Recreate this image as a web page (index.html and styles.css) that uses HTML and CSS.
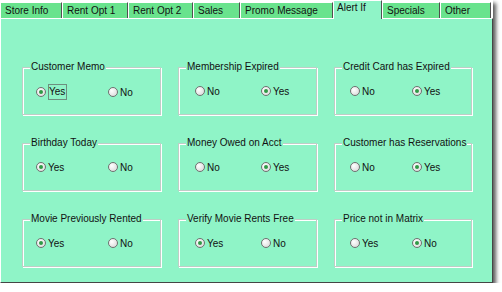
FILE: index.html
```html
<!DOCTYPE html>
<html lang="en">
<head>
<meta charset="UTF-8">
<title>Alert If</title>
<link rel="stylesheet" href="styles.css">
</head>
<body>

  <div class="window">
    <!-- tab strip -->
    <div class="tabs">
      <div class="tab">Store Info</div>
      <div class="tab">Rent Opt 1</div>
      <div class="tab">Rent Opt 2</div>
      <div class="tab">Sales</div>
      <div class="tab">Promo Message</div>
      <div class="tab active">Alert If</div>
      <div class="tab">Specials</div>
      <div class="tab">Other</div>
    </div>

    <div class="panel">
      <div class="groups">

        <fieldset class="group c1">
          <legend>Customer Memo</legend>
          <div class="opts">
            <label class="opt"><span class="radio on"></span><span class="focus">Yes</span></label>
            <label class="opt"><span class="radio"></span>No</label>
          </div>
        </fieldset>
        <fieldset class="group c2">
          <legend>Membership Expired</legend>
          <div class="opts">
            <label class="opt"><span class="radio"></span>No</label>
            <label class="opt"><span class="radio on"></span>Yes</label>
          </div>
        </fieldset>
        <fieldset class="group c3">
          <legend>Credit Card has Expired</legend>
          <div class="opts">
            <label class="opt"><span class="radio"></span>No</label>
            <label class="opt"><span class="radio on"></span>Yes</label>
          </div>
        </fieldset>

        <fieldset class="group c1">
          <legend>Birthday Today</legend>
          <div class="opts">
            <label class="opt"><span class="radio on"></span>Yes</label>
            <label class="opt"><span class="radio"></span>No</label>
          </div>
        </fieldset>
        <fieldset class="group c2">
          <legend>Money Owed on Acct</legend>
          <div class="opts">
            <label class="opt"><span class="radio"></span>No</label>
            <label class="opt"><span class="radio on"></span>Yes</label>
          </div>
        </fieldset>
        <fieldset class="group c3">
          <legend>Customer has Reservations</legend>
          <div class="opts">
            <label class="opt"><span class="radio"></span>No</label>
            <label class="opt"><span class="radio on"></span>Yes</label>
          </div>
        </fieldset>

        <fieldset class="group c1">
          <legend>Movie Previously Rented</legend>
          <div class="opts">
            <label class="opt"><span class="radio on"></span>Yes</label>
            <label class="opt"><span class="radio"></span>No</label>
          </div>
        </fieldset>
        <fieldset class="group c2">
          <legend>Verify Movie Rents Free</legend>
          <div class="opts">
            <label class="opt"><span class="radio on"></span>Yes</label>
            <label class="opt"><span class="radio"></span>No</label>
          </div>
        </fieldset>
        <fieldset class="group c3">
          <legend>Price not in Matrix</legend>
          <div class="opts">
            <label class="opt"><span class="radio"></span>Yes</label>
            <label class="opt"><span class="radio on"></span>No</label>
          </div>
        </fieldset>

      </div>
    </div>
  </div>

</body>
</html>
```

FILE: styles.css
```css
body {
  margin: 0;
  background: #ffffff;
  font-family: "Liberation Sans", Arial, sans-serif;
  font-size: 10px;
  color: #111111;
}

/* Window frame */
.window {
  width: 493px;
  height: 283px;
  display: flex;
  flex-direction: column;
  box-shadow: 3px 3px 4px rgba(0, 0, 0, 0.65);
}

/* Tabs */
.tabs {
  display: grid;
  grid-template-columns: 62px 66px 65px 47px 93px 49px 58px 51px;
  align-items: end;
  height: 18px;
}

.tab {
  box-sizing: border-box;
  height: 16px;
  padding: 2px 0 0 4px;
  background-color: #69e38d;
  border-top: 1px solid #ffffff;
  border-left: 1px solid #ffffff;
  border-right: 1px solid #505050;
  white-space: nowrap;
  overflow: hidden;
}

.tab.active {
  position: relative;
  z-index: 2;
  height: 19px;
  margin-bottom: -1px;
  padding-top: 1px;
  padding-left: 3px;
  background-color: #8ff4c7;
}

/* Panel */
.panel {
  flex: 1;
  background-color: #8ff4c7;
  border-top: 1px solid #ffffff;
  border-left: 1px solid #ffffff;
  border-right: 1px solid #454545;
  border-bottom: 1px solid #454545;
  padding: 42px 0 0 21px;
}

.groups {
  display: grid;
  grid-template-columns: 139px 139px 138px;
  grid-template-rows: 54px 54px 54px;
  column-gap: 17px;
  row-gap: 22px;
}

/* Group boxes */
.group {
  box-sizing: border-box;
  height: 54px;
  margin: 0;
  padding: 0;
  min-width: 0;
  border: 1px solid #bfcdc6;
  box-shadow: inset 1px 1px 0 #ffffff, 1px 1px 0 #ffffff;
}

.group legend {
  margin-left: 7px;
  padding: 0 1px;
  line-height: 12px;
  background-color: #8ff4c7;
}

.opts {
  display: grid;
  margin-top: 11px;
  height: 14px;
  align-items: center;
}

.c1 .opts {
  grid-template-columns: 72px auto;
  padding-left: 13px;
}

.c2 .opts {
  grid-template-columns: 66px auto;
  padding-left: 16px;
}

.c3 .opts {
  grid-template-columns: 62px auto;
  padding-left: 15px;
}

.opt {
  display: flex;
  align-items: center;
  gap: 2px;
}

/* Radio buttons */
.radio {
  box-sizing: border-box;
  width: 10px;
  height: 10px;
  border-radius: 50%;
  border: 1px solid #707070;
  background: radial-gradient(circle at 35% 35%, #ffffff, #d4d4d4);
  display: flex;
  align-items: center;
  justify-content: center;
}

.radio.on::after {
  content: "";
  width: 4px;
  height: 4px;
  border-radius: 50%;
  background-color: #2f9a45;
}

.focus {
  border: 1px solid #6d8f7f;
  padding: 1px 1px 1px 0;
  line-height: 12px;
}
```
